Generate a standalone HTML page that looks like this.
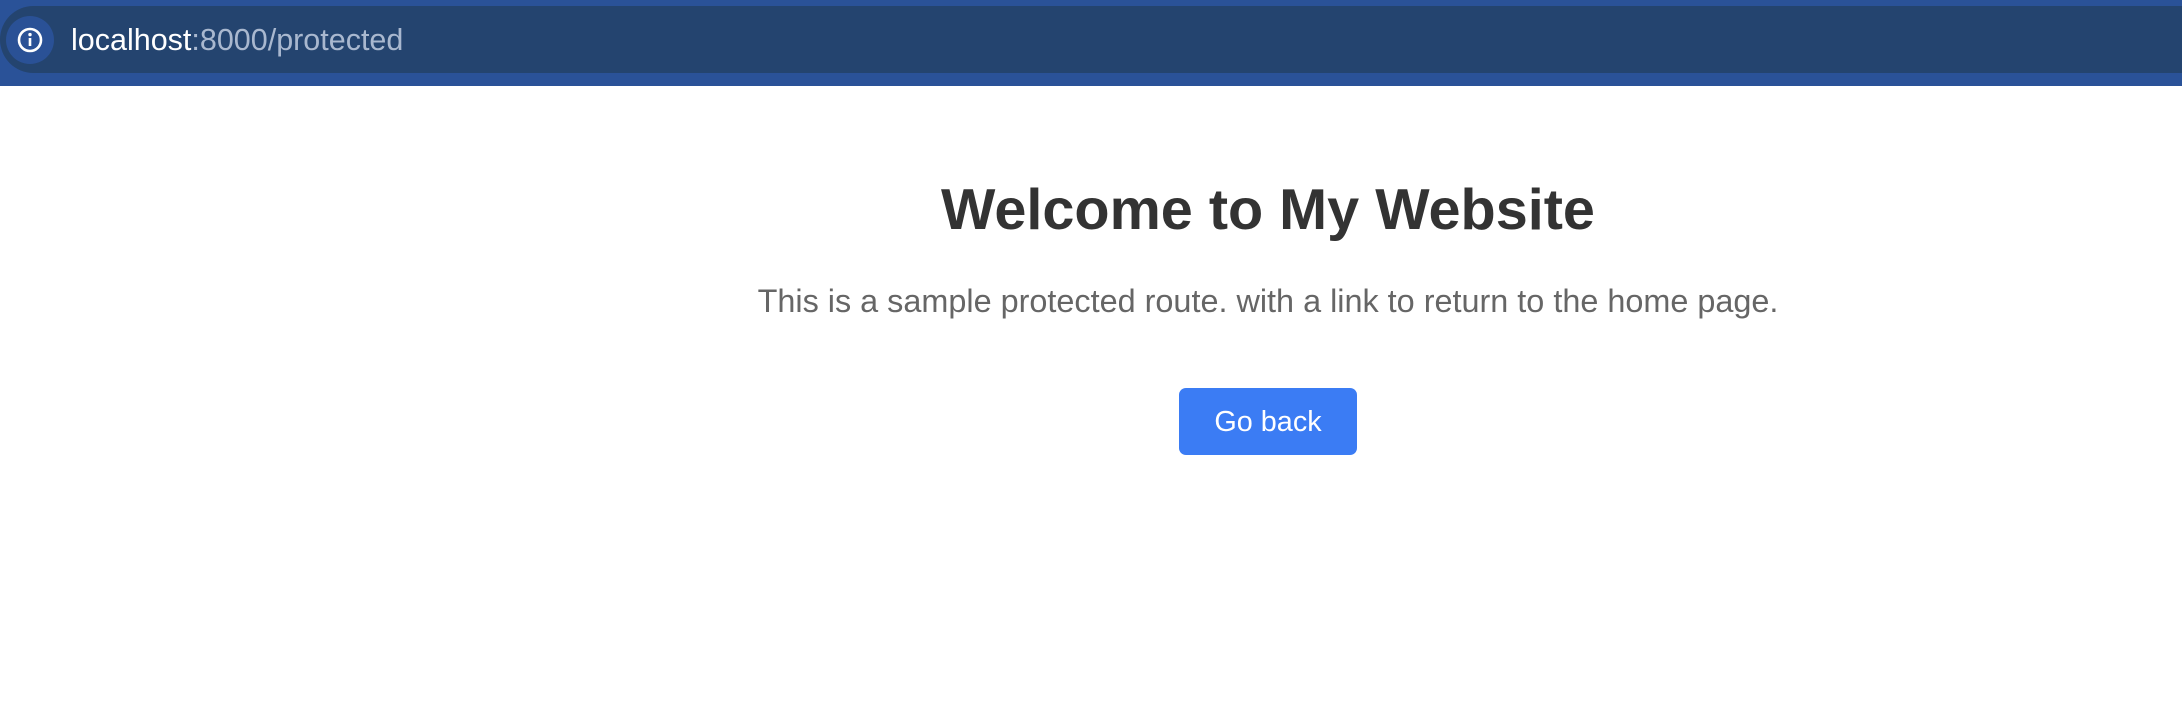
<!DOCTYPE html>
<html><head><meta charset="utf-8"><style>
html,body{margin:0;padding:0;width:2182px;height:702px;background:#fff;overflow:hidden;font-family:"Liberation Sans",Arial,sans-serif}
.top{position:absolute;left:0;top:0;width:2182px;height:86px;background:#2a5298}
.bar{position:absolute;left:0;top:6px;width:2182px;height:67px;background:#24446f;border-radius:34px 0 0 34px}
.ic{position:absolute;left:6px;top:16px;width:48px;height:48px;border-radius:50%;background:#2a5196}
.url{position:absolute;left:71px;top:23px;font-size:30.5px;color:#fff;line-height:34px;white-space:nowrap}
.url span{color:#a9b8cf}
.h{position:absolute;left:0;width:2536px;text-align:center;top:175px;font-size:57.6px;font-weight:bold;color:#333;line-height:70px;margin:0}
.p{position:absolute;left:0;width:2536px;text-align:center;top:281px;font-size:32.4px;color:#666;line-height:40px;margin:0;white-space:nowrap}
.b{position:absolute;left:1179px;top:388px;width:178px;height:67px;background:#3b7cf4;border-radius:7px;color:#fff;font-size:28.8px;line-height:69px;text-align:center}
</style></head><body>
<div class="top"><div class="bar"></div>
<div class="ic"><svg width="48" height="48" viewBox="0 0 48 48"><circle cx="24" cy="24" r="11" fill="none" stroke="#fff" stroke-width="2.6"/><rect x="22.7" y="22" width="2.6" height="8" fill="#fff"/><circle cx="24" cy="18.6" r="1.7" fill="#fff"/></svg></div>
<div class="url">localhost<span>:8000/protected</span></div></div>
<h1 class="h">Welcome to My Website</h1>
<p class="p">This is a sample protected route. with a link to return to the home page.</p>
<div class="b">Go back</div>
</body></html>
